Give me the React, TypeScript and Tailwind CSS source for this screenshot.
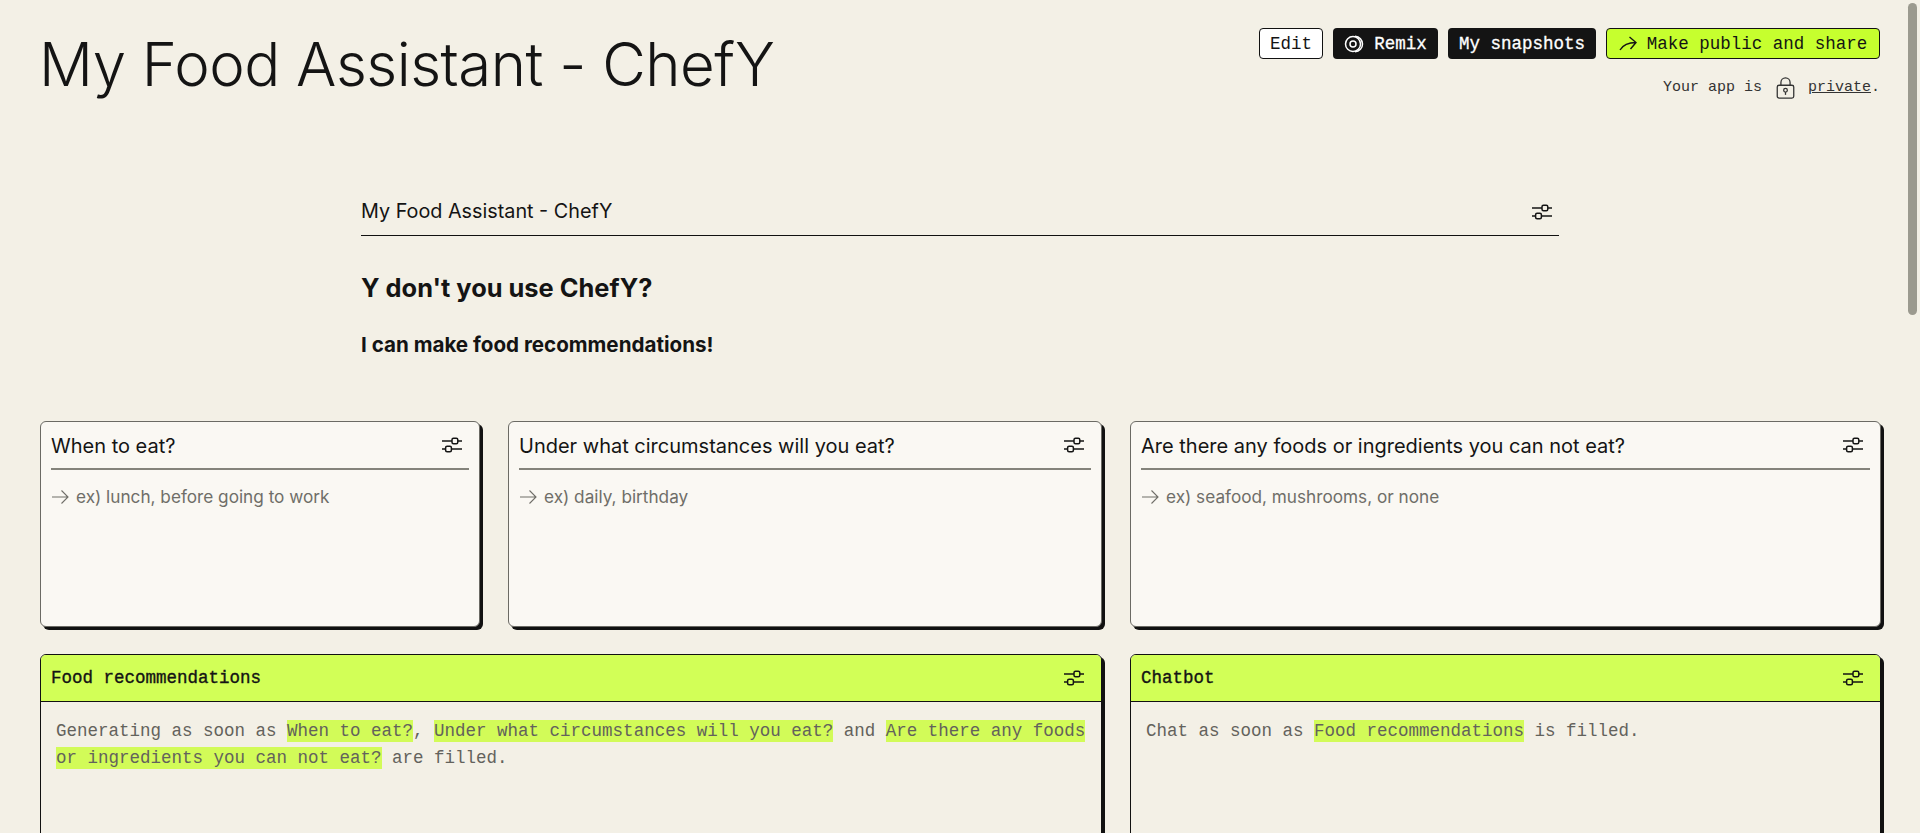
import React from "react";

const sans = "font-['Inter','Noto_Sans',sans-serif]";
const mono = "font-['Liberation_Mono',monospace]";

function Sliders({ className = "" }: { className?: string }) {
  return (
    <svg viewBox="0 0 20 16" width="20" height="16" fill="none" stroke="currentColor" strokeWidth="1.5" className={className}>
      <path d="M0 4H10M16 4H20M0 12H3.5M9.5 12H20" />
      <rect x="10" y="1.2" width="5.8" height="5.6" rx="1.5" />
      <rect x="3.6" y="9.2" width="5.8" height="5.6" rx="1.5" />
    </svg>
  );
}

function Arrow() {
  return (
    <svg viewBox="0 0 18 16" width="18" height="16" fill="none" stroke="currentColor" strokeWidth="1.1">
      <path d="M1 8H17M10.5 1.5L17 8L10.5 14.5" />
    </svg>
  );
}

function InputCard({ title, hint, className }: { title: string; hint: string; className: string }) {
  return (
    <div className={`h-[206px] rounded-[6px] border border-[#6b6a64] bg-[#faf8f3] px-[10px] shadow-[3px_3px_0_#111] ${className}`}>
      <div className="flex h-[48px] items-center justify-between border-b-2 border-[#84837b] pr-[7px]">
        <span className={`${sans} pt-[2px] text-[20px] text-[#141414]`}>{title}</span>
        <Sliders />
      </div>
      <div className={`${sans} mt-[14px] flex items-center gap-[7px] text-[17.2px] text-[#6f6e68]`}>
        <Arrow />
        <span>{hint}</span>
      </div>
    </div>
  );
}

function Mark({ children }: { children: React.ReactNode }) {
  return <span className="bg-[#d2fb58] py-[1px] text-[#63625c]">{children}</span>;
}

function OutputCard({ title, className, children }: { title: string; className: string; children: React.ReactNode }) {
  return (
    <div className={`h-[260px] shrink-0 rounded-[6px] border border-[#111] bg-[#f3f0e6] shadow-[3px_3px_0_#111] ${className}`}>
      <div className="flex h-[47px] items-center justify-between rounded-t-[5px] border-b border-[#111] bg-[#d2ff57] pl-[10px] pr-[17px]">
        <span className={`${mono} text-[17.5px] text-[#141414] [-webkit-text-stroke:0.35px_#141414]`}>{title}</span>
        <Sliders />
      </div>
      <div className={`${mono} px-[15px] pt-[16px] text-[17.5px] leading-[27px] text-[#63625c]`}>{children}</div>
    </div>
  );
}

export default function App() {
  return (
    <div className="relative h-[833px] overflow-hidden bg-[#f3f0e6] text-[#141414]">
      <header className="flex items-start justify-between pl-[39px] pr-[40px]">
        <h1 className={`${sans} mt-[24px] text-[59.9px] font-light leading-[80px] tracking-[-0.5px]`}>My Food Assistant - ChefY</h1>
        <div className="mt-[28px] flex flex-col items-end">
          <div className={`${mono} flex h-[31px] items-stretch gap-[10px] text-[17.5px]`}>
            <button className="w-[64px] rounded-[4px] border border-[#111] bg-white pt-[1px]">Edit</button>
            <button className="flex w-[105px] items-center justify-center gap-[10px] rounded-[4px] bg-[#141414] pt-[1px] text-white [-webkit-text-stroke:0.3px_#fff]">
              <svg viewBox="0 0 20 20" width="20" height="20" fill="none" stroke="currentColor" strokeWidth="1.5">
                <path d="M11 2.2C15.5 2.5 18.5 6 18.5 10S15.5 17.500 11 17.800" />
                <circle cx="9" cy="10" r="7.500" />
                <circle cx="9" cy="10" r="3" />
              </svg>
              Remix
            </button>
            <button className="w-[148px] rounded-[4px] bg-[#141414] pt-[1px] text-white [-webkit-text-stroke:0.3px_#fff]">My snapshots</button>
            <button className="flex w-[274px] items-center justify-center gap-[10px] rounded-[4px] border border-[#111] bg-[#c6ff2e] pt-[1px]">
              <svg viewBox="0 0 18 16" width="18" height="16" fill="none" stroke="currentColor" strokeWidth="1.4">
                <path d="M1 14C4 9 9 6.500 17 6.500M10.500 1L17 6.500L11.500 13" />
              </svg>
              Make public and share
            </button>
          </div>
          <div className={`${mono} mt-[18px] flex items-center text-[15px] text-[#333]`}>
            <span>Your app is</span>
            <svg viewBox="0 0 20 24" width="19" height="22" fill="none" stroke="currentColor" strokeWidth="1.4" className="ml-[14px] mr-[13px]">
              <path d="M5 9V6a5 5 0 0 1 10 0v3" />
              <rect x="1" y="9" width="18" height="14" rx="2" />
              <circle cx="10" cy="14.500" r="2" />
              <path d="M10 16.500V19.500" />
            </svg>
            <span className="underline">private</span>.
          </div>
        </div>
      </header>

      <section className="mx-[361px] mt-[85px] w-[1198px]">
        <div className="flex h-[47px] items-center justify-between border-b border-[#111] pr-[7px]">
          <span className={`${sans} text-[19.800px]`}>My Food Assistant - ChefY</span>
          <Sliders />
        </div>
        <h2 className={`${sans} mt-[34px] text-[25.400px] font-bold leading-[36px]`}>Y don't you use ChefY?</h2>
        <h3 className={`${sans} mt-[25px] text-[20.600px] font-bold leading-[28px]`}>I can make food recommendations!</h3>
      </section>

      <div className="mt-[62px] flex gap-[28px] pl-[40px]">
        <InputCard className="w-[440px]" title="When to eat?" hint="ex) lunch, before going to work" />
        <InputCard className="w-[594px]" title="Under what circumstances will you eat?" hint="ex) daily, birthday" />
        <InputCard className="w-[751px]" title="Are there any foods or ingredients you can not eat?" hint="ex) seafood, mushrooms, or none" />
      </div>

      <div className="mt-[27px] flex gap-[28px] pl-[40px]">
        <OutputCard className="w-[1062px]" title="Food recommendations">
          Generating as soon as <Mark>When to eat?</Mark>, <Mark>Under what circumstances will you eat?</Mark> and{" "}
          <Mark>Are there any foods or ingredients you can not eat?</Mark> are filled.
        </OutputCard>
        <OutputCard className="w-[751px]" title="Chatbot">
          Chat as soon as <Mark>Food recommendations</Mark> is filled.
        </OutputCard>
      </div>

      <div className="absolute right-[3px] top-[3px] h-[312px] w-[9px] rounded-full bg-[#9b9a8f]" />
    </div>
  );
}
